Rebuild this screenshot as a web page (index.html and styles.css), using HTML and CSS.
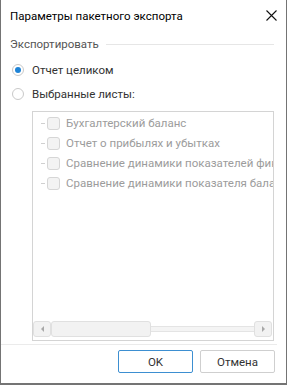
FILE: index.html
```html
<!DOCTYPE html>
<html lang="ru">
<head>
    <meta charset="UTF-8">
    <title>Параметры пакетного экспорта</title>
    <link rel="stylesheet" href="styles.css">
</head>
<body>
    <div class="dialog">
        <div class="titlebar">
            <span class="title">Параметры пакетного экспорта</span>
            <svg class="close" width="11" height="11" viewBox="0 0 11 11">
                <path d="M0.5 0.5 L10.5 10.5 M10.5 0.5 L0.5 10.5" stroke="#111" stroke-width="1.1" fill="none"/>
            </svg>
        </div>
        <div class="content">
            <div class="group-header">
                <span>Экспортировать</span>
                <div class="group-line"></div>
            </div>
            <label class="radio-row">
                <span class="radio checked"></span>
                <span>Отчет целиком</span>
            </label>
            <label class="radio-row">
                <span class="radio"></span>
                <span>Выбранные листы:</span>
            </label>
            <div class="list">
                <div class="items">
                    <div class="item"><span class="dash"></span><span class="check"></span><span class="item-text">Бухгалтерский баланс</span></div>
                    <div class="item"><span class="dash"></span><span class="check"></span><span class="item-text">Отчет о прибылях и убытках</span></div>
                    <div class="item"><span class="dash"></span><span class="check"></span><span class="item-text">Сравнение динамики показателей финансовых результатов</span></div>
                    <div class="item"><span class="dash"></span><span class="check"></span><span class="item-text">Сравнение динамики показателя баланса</span></div>
                </div>
                <div class="hscroll">
                    <div class="sb-btn"><span class="arrow-left"></span></div>
                    <div class="sb-thumb"></div>
                    <div class="sb-track"></div>
                    <div class="sb-btn"><span class="arrow-right"></span></div>
                </div>
            </div>
        </div>
        <div class="separator"></div>
        <div class="buttons">
            <button class="btn default">OK</button>
            <button class="btn">Отмена</button>
        </div>
    </div>
</body>
</html>
```
FILE: styles.css
```css
html, body {
    margin: 0;
    padding: 0;
    background: #fff;
}
body {
    font-family: Roboto, "Noto Sans", sans-serif;
    font-size: 11.5px;
    color: #333;
}
.dialog {
    width: 287px;
    height: 385px;
    box-sizing: border-box;
    border: 1px solid #747474;
    border-top: none;
    border-bottom-width: 2px;
    display: flex;
    flex-direction: column;
    background: #fff;
}
.titlebar {
    height: 32px;
    display: flex;
    align-items: center;
    justify-content: space-between;
    padding: 0 9px 0 9px;
}
.title {
    color: #000;
    font-size: 11.5px;
}
.close {
    margin-top: -1px;
}
.content {
    padding: 5px 0 0 9px;
    flex: 1;
    display: flex;
    flex-direction: column;
}
.group-header {
    height: 16px;
    display: flex;
    align-items: center;
    color: #555;
}
.group-line {
    flex: 1;
    height: 1px;
    background: #e6e6e6;
    margin: 0 12px 0 7px;
}
.radio-row {
    height: 24px;
    display: flex;
    align-items: center;
    gap: 8px;
    padding-left: 2px;
}
.radio-row:first-of-type {
    margin-top: 6px;
}
.radio {
    width: 12px;
    height: 12px;
    box-sizing: border-box;
    border: 1px solid #c9c9c9;
    border-radius: 50%;
    background: #fff;
    display: flex;
    align-items: center;
    justify-content: center;
}
.radio.checked::after {
    content: "";
    width: 6px;
    height: 6px;
    border-radius: 50%;
    background: #1e83d6;
}
.list {
    margin: 5px 0 0 22px;
    width: 242px;
    height: 230px;
    box-sizing: border-box;
    border: 1px solid #d4d4d4;
    display: flex;
    flex-direction: column;
    overflow: hidden;
}
.items {
    flex: 1;
    padding-top: 1px;
}
.item {
    height: 20px;
    display: flex;
    align-items: center;
    white-space: nowrap;
}
.dash {
    width: 4px;
    height: 1px;
    background: #d0d0d0;
    margin-left: 8px;
    flex-shrink: 0;
}
.check {
    width: 13px;
    height: 13px;
    box-sizing: border-box;
    border: 1px solid #d6d6d6;
    border-radius: 3px;
    background: #f3f3f3;
    margin-left: 2px;
    flex-shrink: 0;
}
.item-text {
    color: #9c9c9c;
    margin-left: 6px;
}
.hscroll {
    height: 16px;
    margin: 0 1px 3px 0;
    display: flex;
    align-items: center;
}
.sb-btn {
    width: 18px;
    height: 16px;
    box-sizing: border-box;
    border: 1px solid #e0e0e0;
    border-radius: 3px;
    background: #f2f2f2;
    display: flex;
    align-items: center;
    justify-content: center;
}
.arrow-left {
    border-top: 3px solid transparent;
    border-bottom: 3px solid transparent;
    border-right: 3px solid #a8a8a8;
}
.arrow-right {
    border-top: 3px solid transparent;
    border-bottom: 3px solid transparent;
    border-left: 3px solid #a8a8a8;
}
.sb-thumb {
    width: 100px;
    height: 16px;
    box-sizing: border-box;
    border: 1px solid #e0e0e0;
    border-radius: 3px;
    background: #f2f2f2;
}
.sb-track {
    flex: 1;
    height: 6px;
    box-sizing: border-box;
    border-top: 1px solid #e4e4e4;
    border-bottom: 1px solid #e4e4e4;
    background: #f4f4f4;
}
.separator {
    height: 1px;
    background: #ebebeb;
    margin: 3px 9px 0 0;
}
.buttons {
    display: flex;
    justify-content: flex-end;
    gap: 7px;
    padding: 5px 11px 10px 0;
}
.btn {
    width: 75px;
    height: 23px;
    box-sizing: border-box;
    border: 1px solid #cfcfcf;
    border-radius: 2px;
    background: #fff;
    font-family: Roboto, "Noto Sans", sans-serif;
    font-size: 11.5px;
    color: #333;
    padding: 0;
}
.btn.default {
    border-color: #3d8fd1;
}
```
